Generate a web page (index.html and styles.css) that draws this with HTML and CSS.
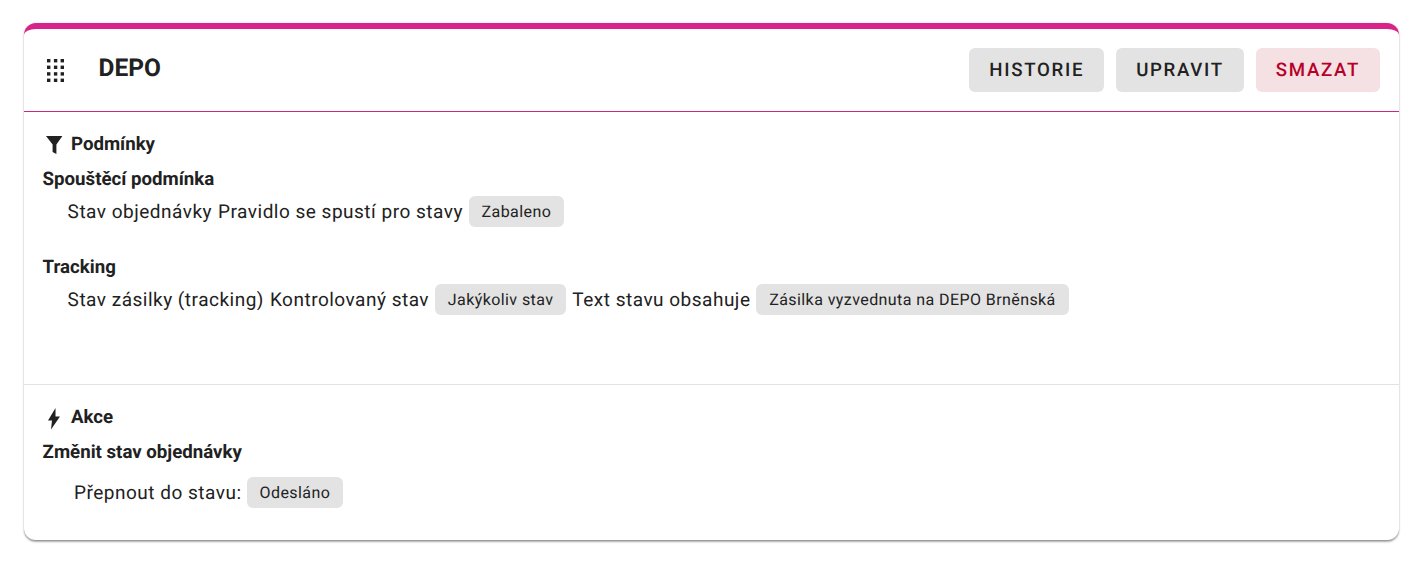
FILE: index.html
```html
<!DOCTYPE html>
<html lang="cs">
<head>
<meta charset="utf-8">
<title>DEPO</title>
<link rel="stylesheet" href="styles.css">
</head>
<body>
<div class="card">
  <header class="head">
    <svg class="drag" viewBox="0 0 17 23" width="17" height="23"><g fill="#212121"><rect x="0" y="0" width="3.4" height="3.4"/><rect x="6.9" y="0" width="3.4" height="3.4"/><rect x="13.6" y="0" width="3.4" height="3.4"/><rect x="0" y="6.6" width="3.4" height="3.4"/><rect x="6.9" y="6.6" width="3.4" height="3.4"/><rect x="13.6" y="6.6" width="3.4" height="3.4"/><rect x="0" y="13.2" width="3.4" height="3.4"/><rect x="6.9" y="13.2" width="3.4" height="3.4"/><rect x="13.6" y="13.2" width="3.4" height="3.4"/><rect x="0" y="19.6" width="3.4" height="3.4"/><rect x="6.9" y="19.6" width="3.4" height="3.4"/><rect x="13.6" y="19.6" width="3.4" height="3.4"/></g></svg>
    <h1 class="title">DEPO</h1>
    <div class="actions">
      <button class="btn">HISTORIE</button>
      <button class="btn">UPRAVIT</button>
      <button class="btn danger">SMAZAT</button>
    </div>
  </header>
  <section class="sec sec-cond">
    <h2 class="sec-title"><svg class="ico" viewBox="0 0 18 22" width="18" height="22"><path fill="#212121" d="M0 1h16.4L10.4 9.5V19L6.6 17V9.5z"/></svg>Podmínky</h2>
    <h3 class="sub">Spouštěcí podmínka</h3>
    <div class="row"><span>Stav objednávky</span><span>Pravidlo se spustí pro stavy</span><span class="chip">Zabaleno</span></div>
    <h3 class="sub sub-next">Tracking</h3>
    <div class="row"><span>Stav zásilky (tracking)</span><span>Kontrolovaný stav</span><span class="chip">Jakýkoliv stav</span><span>Text stavu obsahuje</span><span class="chip">Zásilka vyzvednuta na DEPO Brněnská</span></div>
  </section>
  <section class="sec sec-act">
    <h2 class="sec-title"><svg class="ico" viewBox="0 0 18 22" width="18" height="22"><path fill="#212121" d="M9.5 0 2 12.5H6L5 21.5 14 8.5H9.5z"/></svg>Akce</h2>
    <h3 class="sub">Změnit stav objednávky</h3>
    <div class="row row-act"><span>Přepnout do stavu:</span><span class="chip">Odesláno</span></div>
  </section>
</div>
</body>
</html>
```
FILE: styles.css
```css
* { box-sizing: border-box; }
html, body { margin: 0; background: #fff; }
body { min-height: 564px; padding: 23px 24px 0; font-family: Roboto, "Noto Sans", sans-serif; color: #212121; text-rendering: geometricPrecision; }
.card {
  height: 518px;
  background: #fff;
  border-top: 6px solid #d8248a;
  border-bottom: 1px solid #9c9c9c;
  border-radius: 12px;
  box-shadow: 0 1px 2px rgba(0,0,0,.3), 0 0 2px rgba(0,0,0,.1);
}
.head {
  display: flex;
  align-items: center;
  height: 83px;
  padding: 0 19px 7px 23px;
  border-bottom: 1px solid #c8287f;
}
.drag { flex: none; margin-top: 8px; }
.title { margin: 0 0 0 34.5px; font-size: 24.5px; font-weight: 700; line-height: 32px; padding-top: 2px; }
.actions { margin-left: auto; display: flex; gap: 12px; padding-top: 6px; }
.btn {
  height: 44px;
  padding: 0 20px;
  border: 0;
  border-radius: 6px;
  background: #e3e3e3;
  color: #212121;
  font: 500 18.67px/24px Roboto, sans-serif;
  letter-spacing: 1.68px;
  text-rendering: geometricPrecision;
}
.danger { background: #f5e0e4; color: #b70028; }
.sec { padding: 0 19px; }
.sec-cond { height: 273px; padding-top: 20px; border-bottom: 1px solid #e3e3e3; }
.sec-act { padding-top: 20px; }
.sec-title { display: flex; align-items: center; height: 24px; margin: 0 0 0 3px; font-size: 18.67px; font-weight: 700; line-height: 24px; }
.ico { margin-right: 7px; flex: none; margin-top: 3px; }
.sub { margin: 11px 0 0 -.4px; font-size: 18.67px; font-weight: 700; line-height: 24px; }
.sub-next { margin-top: 28px; }
.row { display: flex; align-items: center; gap: 6px; padding-left: 24.6px; margin-top: 5px; font-size: 19px; line-height: 31px; letter-spacing: .5px; }
.row-act { padding-left: 31px; margin-top: 13px; gap: 5.4px; }
.chip { padding: 0 12.9px 0 12.7px; border-radius: 6px; background: #e3e3e3; font-size: 16px; letter-spacing: .42px; }
```
